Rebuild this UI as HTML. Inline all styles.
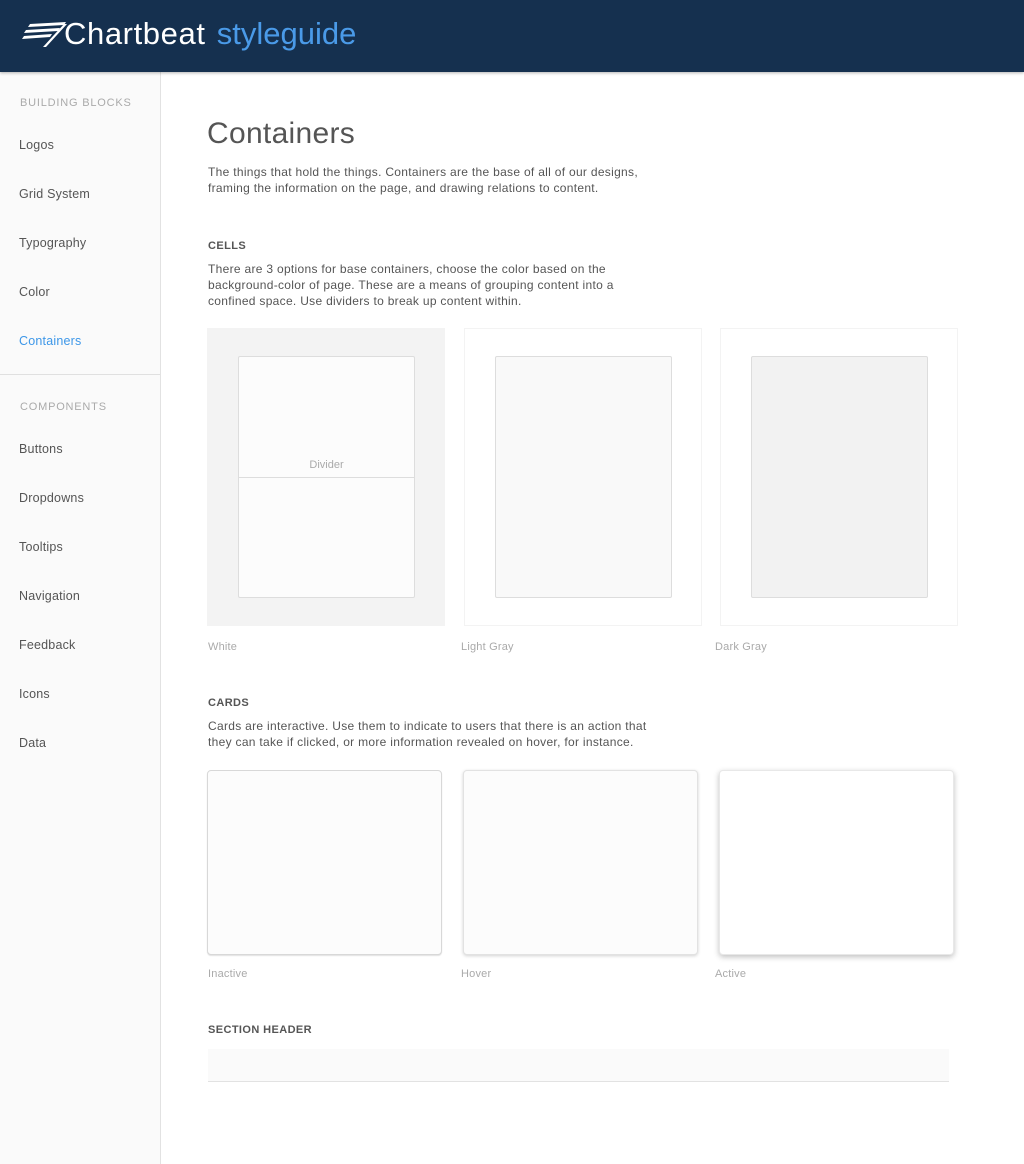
<!DOCTYPE html>
<html><head><meta charset="utf-8"><style>
*{margin:0;padding:0;box-sizing:border-box}
body{width:1024px;height:1164px;font-family:"Liberation Sans",sans-serif;background:#fff;position:relative;overflow:hidden;color:#555}
.hdr{position:absolute;left:0;top:0;width:1024px;height:72px;background:#15304f;box-shadow:0 1px 3px rgba(0,0,0,.3);z-index:2}
.hdr .t{position:absolute;left:64px;top:16px;font-size:31px;color:#fff;letter-spacing:0.6px;white-space:nowrap}
.hdr .t span{color:#4a9ae8;letter-spacing:0px;margin-left:2px}
.side{position:absolute;left:0;top:72px;width:161px;height:1092px;background:#fafafa;border-right:1px solid #e2e2e2}
.side .h{position:absolute;left:20px;font-size:11px;color:#aaa;letter-spacing:0.8px}
.side .i{position:absolute;left:19px;font-size:12.5px;color:#555;letter-spacing:0.2px}
.side .hr{position:absolute;left:0;top:302px;width:160px;border-top:1px solid #e0e0e0}
.abs{position:absolute}
h1{position:absolute;left:207px;top:117px;font-size:30px;font-weight:normal;color:#555;letter-spacing:0.3px}
.p{position:absolute;left:208px;font-size:12px;line-height:16px;color:#555;letter-spacing:0.3px}
.sh{position:absolute;left:208px;font-size:11px;font-weight:bold;color:#555;letter-spacing:0.4px}
.lab{position:absolute;font-size:11px;color:#aaa;letter-spacing:0.2px}
.cell{position:absolute;top:328px;width:238px;height:298px}
.inner{position:absolute;left:31px;top:28px;width:177px;height:242px;border:1px solid #ddd;border-radius:2px}
.card{position:absolute;top:770px;width:235px;height:185px;border-radius:4px;border:1px solid #e0e0e0}
</style></head><body>
<div class="hdr">
<svg class="abs" style="left:22px;top:20px" width="46" height="28" viewBox="0 0 46 28">
<polygon points="8,4 44,2 42,5 6,7" fill="#fff"/>
<polygon points="4,10 38,8 36,11 2,13" fill="#fff"/>
<polygon points="2,16 30,14 28,17 0,19" fill="#fff"/>
<polygon points="42,4 45,4 24,27 21,27" fill="#fff"/>
</svg>
<div class="t">Chartbeat <span>styleguide</span></div>
</div>
<div class="side">
<div class="h" style="top:25px">BUILDING BLOCKS</div>
<div class="i" style="top:66px">Logos</div>
<div class="i" style="top:115px">Grid System</div>
<div class="i" style="top:164px">Typography</div>
<div class="i" style="top:213px">Color</div>
<div class="i" style="top:262px;color:#3d97e8">Containers</div>
<div class="hr"></div>
<div class="h" style="top:329px">COMPONENTS</div>
<div class="i" style="top:370px">Buttons</div>
<div class="i" style="top:419px">Dropdowns</div>
<div class="i" style="top:468px">Tooltips</div>
<div class="i" style="top:517px">Navigation</div>
<div class="i" style="top:566px">Feedback</div>
<div class="i" style="top:615px">Icons</div>
<div class="i" style="top:664px">Data</div>
</div>
<h1>Containers</h1>
<div class="p" style="top:164px">The things that hold the things. Containers are the base of all of our designs,<br>framing the information on the page, and drawing relations to content.</div>
<div class="sh" style="top:240px">CELLS</div>
<div class="p" style="top:261px">There are 3 options for base containers, choose the color based on the<br>background-color of page. These are a means of grouping content into a<br>confined space. Use dividers to break up content within.</div>
<div class="cell" style="left:207px;background:#f3f3f3"><div class="inner" style="background:#fcfcfc">
<div class="abs" style="left:0;top:102px;width:175px;text-align:center;font-size:11px;color:#aaa">Divider</div>
<div class="abs" style="left:0;top:120px;width:175px;border-top:1px solid #ddd"></div></div></div>
<div class="cell" style="left:464px;background:#fff;border:1px solid #f3f3f3"><div class="inner" style="left:30px;top:27px;background:#f9f9f9"></div></div>
<div class="cell" style="left:720px;background:#fff;border:1px solid #f3f3f3"><div class="inner" style="left:30px;top:27px;background:#f2f2f2"></div></div>
<div class="lab" style="left:208px;top:641px">White</div>
<div class="lab" style="left:461px;top:641px">Light Gray</div>
<div class="lab" style="left:715px;top:641px">Dark Gray</div>
<div class="sh" style="top:697px">CARDS</div>
<div class="p" style="top:718px">Cards are interactive. Use them to indicate to users that there is an action that<br>they can take if clicked, or more information revealed on hover, for instance.</div>
<div class="card" style="left:207px;background:#fcfcfc;border-color:#d8d8d8;box-shadow:0 1px 1px rgba(0,0,0,.12)"></div>
<div class="card" style="left:463px;background:#fcfcfc;border-color:#e2e2e2;box-shadow:0 1px 3px rgba(0,0,0,.18)"></div>
<div class="card" style="left:719px;background:#fff;border-color:#e8e8e8;box-shadow:0 2px 6px rgba(0,0,0,.25)"></div>
<div class="lab" style="left:208px;top:968px">Inactive</div>
<div class="lab" style="left:461px;top:968px">Hover</div>
<div class="lab" style="left:715px;top:968px">Active</div>
<div class="sh" style="top:1024px">SECTION HEADER</div>
<div class="abs" style="left:208px;top:1049px;width:741px;height:33px;background:#fafafa;border-bottom:1px solid #e2e2e2"></div>
</body></html>
